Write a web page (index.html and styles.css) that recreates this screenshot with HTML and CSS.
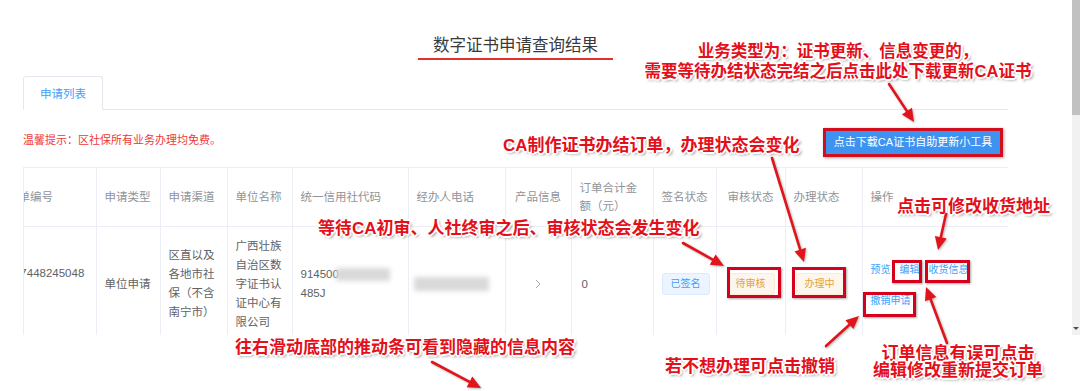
FILE: index.html
```html
<!DOCTYPE html>
<html lang="zh-CN">
<head>
<meta charset="utf-8">
<title>数字证书申请查询结果</title>
<link rel="stylesheet" href="styles.css">
</head>
<body>
<div class="page">
  <div class="main">
    <div class="title-row"><h1 class="title">数字证书申请查询结果</h1></div>
    <div class="tabs"><div class="tab">申请列表</div></div>
    <div class="toolbar">
      <p class="tip">温馨提示：区社保所有业务办理均免费。</p>
      <button class="dl-btn" type="button">点击下载CA证书自助更新小工具</button>
    </div>
    <div class="table-wrap">
      <table class="grid">
        <colgroup>
          <col class="w104"><col class="w64"><col class="w67"><col class="w65"><col class="w116"><col class="w97"><col class="w66"><col class="w82"><col class="w63"><col class="w69"><col class="w77"><col class="w146">
        </colgroup>
        <thead>
          <tr>
            <th class="first">订单编号</th>
            <th>申请类型</th>
            <th>申请渠道</th>
            <th>单位名称</th>
            <th>统一信用社代码</th>
            <th>经办人电话</th>
            <th class="c">产品信息</th>
            <th>订单合计金额（元）</th>
            <th class="c">签名状态</th>
            <th class="c">审核状态</th>
            <th>办理状态</th>
            <th>操作</th>
          </tr>
        </thead>
        <tbody>
          <tr>
            <td class="first order">1107448245048</td>
            <td>单位申请</td>
            <td>区直以及各地市社保（不含南宁市）</td>
            <td>广西壮族自治区数字证书认证中心有限公司</td>
            <td>914500<span class="blur blur-code"></span><br>485J</td>
            <td class="phone"><span class="blur blur-phone"></span></td>
            <td class="c"><svg class="chev" width="6" height="10" viewBox="0 0 6 10"><path d="M1 1 L5 5 L1 9" fill="none" stroke="#a8abb2" stroke-width="1"/></svg></td>
            <td class="amount">0</td>
            <td class="c"><span class="tag tag-info">已签名</span></td>
            <td class="c"><span class="tag tag-warn">待审核</span></td>
            <td class="state"><span class="tag tag-warn">办理中</span></td>
            <td>
              <div class="ops">
                <div class="ops-line"><a class="link">预览</a><a class="link">编辑</a><a class="link">收货信息</a></div>
                <div class="ops-line"><a class="link">撤销申请</a></div>
              </div>
            </td>
          </tr>
        </tbody>
      </table>
    </div>
  </div>
  <div class="vscroll"><div class="thumb"></div><div class="down"></div></div>

  <!-- annotation layer drawn over the screenshot -->
  <div class="note note-top">业务类型为：证书更新、信息变更的，<br>需要等待办结状态完结之后点击此处下载更新<b class="en">CA</b>证书</div>
  <div class="note note-ca"><b class="en">CA</b>制作证书办结订单，办理状态会变化</div>
  <div class="note note-audit">等待<b class="en">CA</b>初审、人社终审之后、审核状态会发生变化</div>
  <div class="note note-addr">点击可修改收货地址</div>
  <div class="note note-scroll">往右滑动底部的推动条可看到隐藏的信息内容</div>
  <div class="note note-cancel">若不想办理可点击撤销</div>
  <div class="note note-edit">订单信息有误可点击<br>编辑修改重新提交订单</div>

  <div class="mark mark-audit"></div>
  <div class="mark mark-state"></div>
  <div class="mark mark-edit"></div>
  <div class="mark mark-addr"></div>
  <div class="mark mark-cancel"></div>

  <svg class="arrows" width="1080" height="391" viewBox="0 0 1080 391">
    <g stroke="#e1141c" stroke-width="2.6" fill="#e1141c" stroke-linecap="round">
      <line x1="889" y1="84" x2="906.9" y2="111.1"/>
      <polygon stroke="none" points="914,122 901.9,114.4 911.9,107.8"/>
      <line x1="772" y1="158" x2="800.2" y2="249.6"/>
      <polygon stroke="none" points="804,262 794.5,251.4 805.9,247.8"/>
      <line x1="683" y1="243" x2="712.7" y2="259.6"/>
      <polygon stroke="none" points="724,266 709.8,264.8 715.6,254.4"/>
      <line x1="946" y1="214" x2="940.8" y2="237.3"/>
      <polygon stroke="none" points="938,250 934.9,236.0 946.7,238.6"/>
      <line x1="826" y1="346" x2="849.4" y2="324.7"/>
      <polygon stroke="none" points="859,316 853.4,329.1 845.4,320.3"/>
      <line x1="947" y1="343" x2="930.6" y2="299.2"/>
      <polygon stroke="none" points="926,287 936.2,297.1 925.0,301.3"/>
      <line x1="432" y1="362" x2="469.5" y2="381.9"/>
      <polygon stroke="none" points="481,388 466.7,387.2 472.3,376.6"/>
    </g>
  </svg>
</div>
</body>
</html>
```

FILE: styles.css
```css
* { box-sizing: border-box; }
html, body { margin: 0; padding: 0; background: #fff; }
body {
  width: 1080px;
  height: 391px;
  overflow: hidden;
  font-family: "Liberation Sans", "Noto Sans CJK SC", sans-serif;
  color: #606266;
}
.page { position: relative; display: flex; width: 1080px; height: 391px; }
.main { width: 1072px; padding: 0 64px 0 23px; }

/* title */
.title-row { text-align: center; padding-top: 35px; }
.title {
  display: inline-block;
  margin: 0;
  padding: 0 15px 3px;
  font-size: 16.5px;
  line-height: 20px;
  font-weight: 400;
  color: #3a3a3a;
  border-bottom: 2px solid #e0312f;
}

/* tabs */
.tabs { margin-top: 16px; display: flex; border-bottom: 1px solid #e4e7ed; }
.tab {
  width: 80px;
  height: 34px;
  margin-bottom: -1px;
  border: 1px solid #e4e7ed;
  border-bottom-color: #fff;
  border-radius: 3px 3px 0 0;
  display: flex;
  align-items: center;
  justify-content: center;
  font-size: 11.5px;
  color: #409eff;
}

/* toolbar */
.toolbar { display: flex; justify-content: space-between; align-items: flex-start; padding-right: 5px; }
.tip { margin: 22px 0 0; font-size: 11px; line-height: 16px; color: #ee3737; }
.dl-btn {
  margin-top: 18px;
  width: 180px;
  height: 29px;
  padding: 0;
  border: 3px solid #d40d1d;
  background: #3f93f0;
  color: #fff;
  font: 11px/1 "Liberation Sans", "Noto Sans CJK SC", sans-serif;
  box-shadow: 1px 1px 3px rgba(0, 0, 0, .35);
}

/* table */
.table-wrap { margin-top: 10px; height: 168px; overflow: hidden; border-left: 1px solid #ebeef5; }
.grid {
  margin-left: -32px;
  width: 1016px;
  table-layout: fixed;
  border-collapse: collapse;
  border-top: 1px solid #ebeef5;
  font-size: 11.5px;
}
.w104 { width: 104px; } .w64 { width: 64px; } .w67 { width: 67px; } .w65 { width: 65px; }
.w116 { width: 116px; } .w97 { width: 97px; } .w66 { width: 66px; } .w82 { width: 82px; }
.w63 { width: 63px; } .w69 { width: 69px; } .w77 { width: 77px; } .w146 { width: 146px; }

.grid th, .grid td {
  padding: 0 8px;
  text-align: left;
  vertical-align: middle;
  border-right: 1px solid #ebeef5;
  border-bottom: 1px solid #ebeef5;
  word-break: break-all;
}
.grid thead tr { height: 59px; }
.grid th { font-weight: 400; color: #909399; line-height: 18px; }
.grid tbody tr { height: 115px; }
.grid td { line-height: 19px; color: #606266; }
.grid th.first { padding-left: 15px; }
.grid td.first { padding-left: 10px; }
.grid .c { text-align: center; }
.grid .order { padding-bottom: 22px; white-space: nowrap; }
.grid .phone { padding-left: 5px; }
.grid .amount { padding-left: 10px; }
.grid .state { padding-left: 10px; }

.blur { display: inline-block; vertical-align: middle; background: #d9d9d9; filter: blur(2.5px); }
.blur-code { width: 54px; height: 13px; margin-left: -3px; }
.blur-phone { width: 75px; height: 14px; }
.chev { display: inline-block; vertical-align: middle; }

.tag {
  display: inline-block;
  height: 22px;
  padding: 0 8px;
  border: 1px solid;
  border-radius: 3px;
  font-size: 10px;
  line-height: 20px;
  white-space: nowrap;
}
.tag-info { background: #ecf5ff; border-color: #d9ecff; color: #409eff; }
.tag-warn { background: #fdf6ec; border-color: #faecd8; color: #e6a23c; }

.ops { padding-top: 3px; }
.ops-line { display: flex; gap: 9px; line-height: 14px; font-size: 10px; }
.ops-line + .ops-line { margin-top: 17px; }
.link { color: #409eff; white-space: nowrap; }

/* right scrollbar */
.vscroll {
  width: 8px;
  height: 335px;
  background: #f1f1f1;
  display: flex;
  flex-direction: column;
  justify-content: space-between;
}
.thumb { height: 115px; background: #c1c1c1; }
.down {
  width: 0;
  height: 0;
  margin: 0 auto 5px;
  border-left: 3px solid transparent;
  border-right: 3px solid transparent;
  border-top: 3px solid #505050;
}

/* annotations (overlay) */
.note {
  position: absolute;
  margin: 0;
  font-family: "Noto Sans CJK SC", sans-serif;
  font-weight: 700;
  font-size: 17px;
  line-height: 20px;
  color: #e3101b;
  white-space: nowrap;
  text-shadow:
    1px 0 0 #fff, -1px 0 0 #fff, 0 1px 0 #fff, 0 -1px 0 #fff,
    1px 1px 0 #fff, -1px -1px 0 #fff, 1px -1px 0 #fff, -1px 1px 0 #fff,
    2px 0 0 #fff, -2px 0 0 #fff, 0 2px 0 #fff, 0 -2px 0 #fff,
    2px 2px 3px rgba(0, 0, 0, .5);
}
.note .en { font-family: "Liberation Sans", sans-serif; font-weight: 700; }
.note-top { left: 638px; top: 40px; width: 400px; text-align: center; font-size: 16.5px; }
.note-ca { left: 503px; top: 134px; }
.note-audit { left: 318px; top: 217px; }
.note-addr { left: 897px; top: 195px; }
.note-scroll { left: 235px; top: 336px; }
.note-cancel { left: 665px; top: 355px; }
.note-edit { left: 858px; top: 344px; width: 200px; text-align: center; line-height: 16.5px; }

.mark {
  position: absolute;
  border: 3px solid #d6001c;
  box-shadow: 1px 1px 2px rgba(0, 0, 0, .35);
}
.mark-audit { left: 727px; top: 267px; width: 54px; height: 31px; }
.mark-state { left: 792px; top: 267px; width: 54px; height: 31px; }
.mark-edit { left: 892px; top: 260px; width: 30px; height: 23px; }
.mark-addr { left: 925px; top: 260px; width: 45px; height: 23px; }
.mark-cancel { left: 863px; top: 292px; width: 53px; height: 25px; }

.arrows { position: absolute; left: 0; top: 0; pointer-events: none; filter: drop-shadow(1px 1px 1px rgba(0, 0, 0, .3)); }
```
